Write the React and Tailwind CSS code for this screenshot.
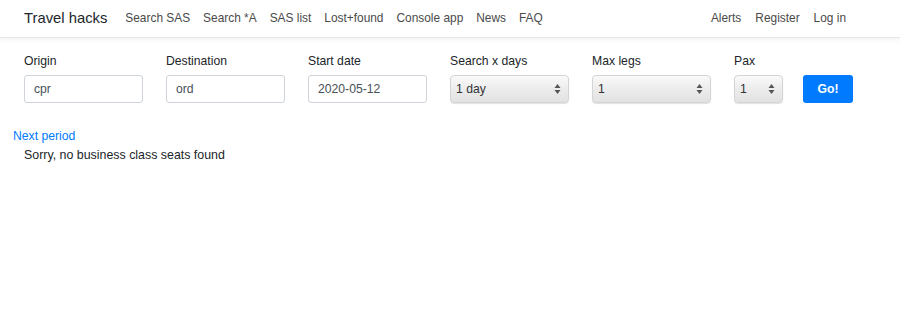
import { useState } from 'react';

const NAV = ['Search SAS', 'Search *A', 'SAS list', 'Lost+found', 'Console app', 'News', 'FAQ'];
const RIGHT = ['Alerts', 'Register', 'Log in'];

const Arrows = () => (
    <svg width="7" height="11" viewBox="0 0 7 11" className="absolute right-[7px] top-1/2 -translate-y-1/2">
        <path d="M3.5 0.5 L6.5 4.5 L0.5 4.5 Z" fill="#555" />
        <path d="M3.5 10.5 L6.5 6.5 L0.5 6.5 Z" fill="#555" />
    </svg>
);

function Field({ label, children, w = 'w-[142px]' }) {
    return (
        <div className={`${w} flex flex-col shrink-0`}>
            <label className="text-[12.2px] text-[#212529] leading-[16px] mb-[6px]">{label}</label>
            {children}
        </div>
    );
}

function TextBox({ value }) {
    return (
        <div className="w-[119px] h-[28px] border border-[#ced4da] rounded-[3px] bg-white flex items-center px-[9px] text-[12.2px] text-[#495057]">
            {value}
        </div>
    );
}

function Select({ value, w = 'w-[119px]' }) {
    return (
        <div className={`${w} relative h-[28px] rounded-[4px] border border-[#d4d4d4] bg-gradient-to-b from-[#fafafa] via-[#ececec] to-[#e2e2e2] shadow-[0_1px_1px_rgba(0,0,0,0.12)] flex items-center px-[5px] text-[12.2px] text-[#333]`}>
            {value}
            <Arrows />
        </div>
    );
}

export default function App() {
    const [days] = useState('1 day');

    return (
        <div className="min-h-[314px] bg-white font-['Liberation_Sans',Arial,sans-serif]">
            {/* Navbar */}
            <nav className="h-[38px] flex items-center pl-[24px] pr-[54px] border-b border-[#e5e5e5] shadow-[0_2px_6px_rgba(0,0,0,0.05)]">
                <span className="text-[14.8px] text-[#212529] mr-[18px]">Travel hacks</span>
                <div className="flex gap-[13px] text-[11.9px] text-[#4a4a4a]">
                    {NAV.map(n => <span key={n}>{n}</span>)}
                </div>
                <div className="ml-auto flex gap-[14px] text-[11.9px] text-[#4a4a4a]">
                    {RIGHT.map(n => <span key={n}>{n}</span>)}
                </div>
            </nav>

            {/* Search form */}
            <div className="flex items-end pl-[24px] pt-[15px]">
                <Field label="Origin"><TextBox value="cpr" /></Field>
                <Field label="Destination"><TextBox value="ord" /></Field>
                <Field label="Start date"><TextBox value="2020-05-12" /></Field>
                <Field label="Search x days"><Select value={days} /></Field>
                <Field label="Max legs"><Select value="1" /></Field>
                <Field label="Pax" w="w-[69px]"><Select value="1" w="w-[49px]" /></Field>
                <button className="w-[50px] h-[28px] rounded-[3px] bg-[#007bff] text-white text-[12.2px] font-bold">Go!</button>
            </div>

            <div className="pl-[13px] pt-[24px] text-[12.2px] text-[#007bff] leading-[18px]">Next period</div>
            <div className="pl-[24px] pt-[1px] text-[12.4px] text-[#212529] leading-[18px]">Sorry, no business class seats found</div>
        </div>
    );
}
